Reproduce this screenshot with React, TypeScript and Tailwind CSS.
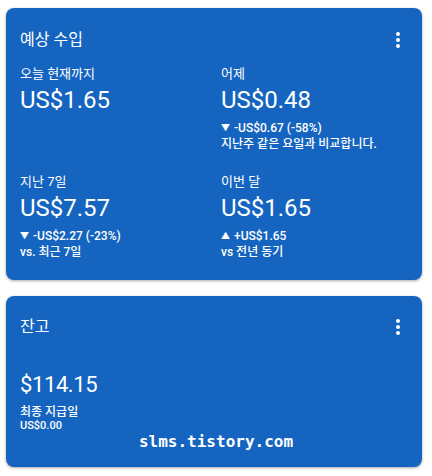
import React from "react";

// Estimated earnings + balance cards (AdSense style)
const STATS = [
  {
    label: "오늘 현재까지",
    value: "US$1.65",
  },
  {
    label: "어제",
    value: "US$0.48",
    arrow: "▼",
    change: "-US$0.67 (-58%)",
    note: "지난주 같은 요일과 비교합니다.",
  },
  {
    label: "지난 7일",
    value: "US$7.57",
    arrow: "▼",
    change: "-US$2.27 (-23%)",
    note: "vs. 최근 7일",
  },
  {
    label: "이번 달",
    value: "US$1.65",
    arrow: "▲",
    change: "+US$1.65",
    note: "vs 전년 동기",
  },
];

function MoreVert() {
  return (
    <svg width="24" height="24" viewBox="0 0 24 24" fill="white" aria-hidden>
      <circle cx="12" cy="6" r="2" />
      <circle cx="12" cy="12" r="2" />
      <circle cx="12" cy="18" r="2" />
    </svg>
  );
}

function CardHeader({ title }: { title: string }) {
  return (
    <div className="flex items-center justify-between">
      <h2 className="text-[16px] leading-6 font-normal">{title}</h2>
      <button aria-label="더보기" className="w-6 h-6 flex items-center justify-center">
        <MoreVert />
      </button>
    </div>
  );
}

export default function App() {
  return (
    <div className="relative w-[432px] h-[476px] bg-white pt-2 px-[6px] flex flex-col gap-4 text-white font-['Roboto','Noto_Sans_CJK_KR',sans-serif]">
      {/* ── 예상 수입 ─────────────────────────────────────────────── */}
      <section className="w-[416px] bg-[#1565c0] rounded-lg shadow-[0_1px_3px_rgba(0,0,0,0.35)] pt-[20px] pl-[14px] pr-[12px] pb-[20px]">
        <CardHeader title="예상 수입" />
        <div className="mt-3 grid grid-cols-2 gap-x-3 gap-y-5">
          {STATS.map((s) => (
            <div key={s.label} className="flex flex-col">
              <span className="text-[13px] leading-5">{s.label}</span>
              <span className="text-[24px] leading-8">{s.value}</span>
              {s.change && (
                <>
                  <span className="mt-1 text-[12px] leading-4 font-medium">
                    <span className="text-[9px] mr-1 align-[1px]">{s.arrow}</span>
                    {s.change}
                  </span>
                  <span className="text-[12px] leading-4 font-medium">{s.note}</span>
                </>
              )}
            </div>
          ))}
        </div>
      </section>

      {/* ── 잔고 ─────────────────────────────────────────────────── */}
      <section className="w-[416px] bg-[#1565c0] rounded-lg shadow-[0_1px_3px_rgba(0,0,0,0.35)] pt-[19px] pl-[14px] pr-[12px] pb-[34px] flex flex-col">
        <CardHeader title="잔고" />
        <span className="mt-[32px] text-[22px] leading-7 tracking-[-0.4px]">$114.15</span>
        <span className="mt-[5px] text-[12px] leading-4 font-medium">최종 지급일</span>
        <span className="-mt-px text-[11px] leading-[14px] font-medium">US$0.00</span>
      </section>

      {/* watermark */}
      <span className="absolute left-0 right-0 top-[432px] text-center text-[16px] leading-5 font-bold font-['DejaVu_Sans_Mono',monospace]">
        slms.tistory.com
      </span>
    </div>
  );
}
